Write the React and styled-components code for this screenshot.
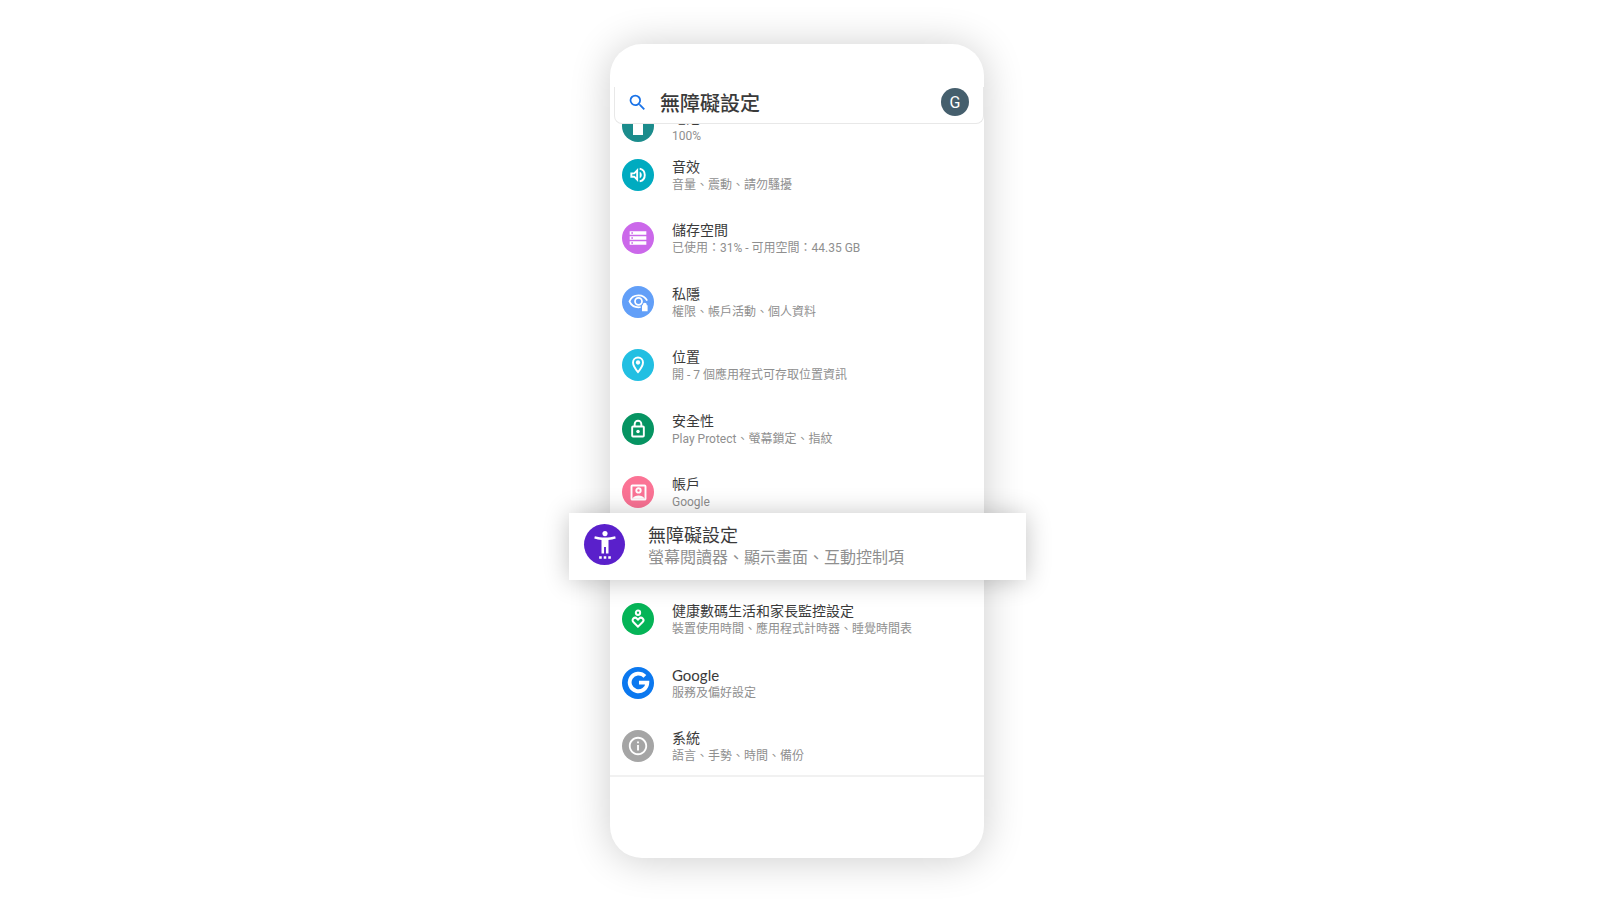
import React from 'react'
import styled, { createGlobalStyle } from 'styled-components'
import { MdSearch, MdStorage, MdOutlineInfo } from 'react-icons/md'

const BatteryIcon = () => (
  <svg viewBox="0 0 24 24" fill="currentColor" aria-hidden="true">
    <path d="M9 0h6v2h2v19H7V2h2z" />
  </svg>
)

const VolumeIcon = () => (
  <svg viewBox="0 0 24 24" fill="none" stroke="currentColor" strokeWidth="2.300" aria-hidden="true">
    <path d="M4 10v4h3.500l3.500 3.500v-11L7.500 10z" />
    <path d="M14 8v8c1.500-.7 2.500-2.200 2.500-4S15.500 8.700 14 8z" fill="currentColor" stroke="none" />
    <path d="M14 4.300a7.900 7.900 0 0 1 0 15.400" />
  </svg>
)

const PrivacyIcon = () => (
  <svg viewBox="0 0 24 24" fill="none" stroke="currentColor" strokeWidth="2" aria-hidden="true">
    <path d="M14.500 18.300c-.8.2-1.700.3-2.500.3-4.500 0-8.500-2.500-10.300-6.800C3.500 7.500 7.500 5 12 5c4.300 0 8 2.300 9.900 6" />
    <circle cx="12" cy="11.800" r="4" />
    <path
      d="M16 16.200h1v-.7a2.200 2.200 0 0 1 4.400 0v.7h1V23H16z"
      fill="currentColor"
      stroke="none"
    />
  </svg>
)

const LocationIcon = () => (
  <svg viewBox="0 0 24 24" fill="none" stroke="currentColor" strokeWidth="2.300" aria-hidden="true">
    <path d="M12 20.500c-3.300-3.900-6-7.900-6-11.500a6 6 0 0 1 12 0c0 3.600-2.700 7.600-6 11.500z" />
    <circle cx="12" cy="9" r="2.600" fill="currentColor" stroke="none" />
  </svg>
)

const LockIcon = () => (
  <svg viewBox="0 0 24 24" fill="none" stroke="currentColor" strokeWidth="2.300" aria-hidden="true">
    <rect x="5" y="9" width="14" height="12" rx="1" />
    <path d="M8 9V6a4 4 0 0 1 8 0v3" />
    <circle cx="12" cy="15" r="2.100" fill="currentColor" stroke="none" />
  </svg>
)

const AccountIcon = () => (
  <svg viewBox="0 0 24 24" fill="none" stroke="currentColor" strokeWidth="2.200" aria-hidden="true">
    <rect x="4" y="4" width="16" height="16" rx="1" />
    <circle cx="12" cy="9.600" r="2.500" />
    <path d="M5 19c1.200-2.600 4.300-3.600 7-3.600s5.800 1 7 3.600z" fill="currentColor" stroke="none" />
  </svg>
)

const WellbeingIcon = () => (
  <svg viewBox="0 0 24 24" fill="none" stroke="currentColor" strokeWidth="2.400" aria-hidden="true">
    <circle cx="12" cy="4.500" r="2.600" />
    <path d="M12 21.200l-5.600-5.500a3 3 0 0 1 4.200-4.300l1.400 1.400 1.400-1.400a3 3 0 0 1 4.200 4.300z" />
  </svg>
)

const GoogleIcon = () => (
  <svg viewBox="0 0 24 24" fill="none" stroke="currentColor" strokeWidth="4" aria-hidden="true">
    <path d="M18.700 5.600A9.200 9.200 0 1 0 21.200 12.200H12.500" />
  </svg>
)

const AccessibilityIcon = () => (
  <svg viewBox="0 0 24 24" fill="currentColor" aria-hidden="true">
    <circle cx="12" cy="2.200" r="2.200" />
    <path d="M20.700 4.400c-2.700.8-5.700 1.200-8.700 1.200s-6-.4-8.700-1.200L2.800 6.500c2 .6 4.200 1 6.200 1.200V19.200h2.200v-5.400h1.600v5.400H15V7.700c2-.2 4.200-.6 6.200-1.200z" />
    <path d="M7 21.600h2.200v2.200H7zM10.900 21.600h2.200v2.200h-2.200zM14.800 21.600H17v2.200h-2.200z" />
  </svg>
)

const battery = { title: '電池', text: '100%', color: '#1b8c8c', icon: BatteryIcon, size: 24 }

const items = [
  { title: '音效', text: '音量、震動、請勿騷擾', color: '#00abc0', icon: VolumeIcon, size: 20 },
  { title: '儲存空間', text: '已使用：31% - 可用空間：44.35 GB', color: '#cb68ea', icon: MdStorage, size: 20 },
  { title: '私隱', text: '權限、帳戶活動、個人資料', color: '#629ff8', icon: PrivacyIcon, size: 21 },
  { title: '位置', text: '開 - 7 個應用程式可存取位置資訊', color: '#22bfe2', icon: LocationIcon, size: 20 },
  { title: '安全性', text: 'Play Protect、螢幕鎖定、指紋', color: '#069462', icon: LockIcon, size: 20 },
  { title: '帳戶', text: 'Google', color: '#fb7395', icon: AccountIcon, size: 21 },
  { title: '無障礙設定', text: '螢幕閱讀器、顯示畫面、互動控制項', color: '#5a20cb', icon: AccessibilityIcon, size: 28, raised: true },
  { title: '健康數碼生活和家長監控設定', text: '裝置使用時間、應用程式計時器、睡覺時間表', color: '#05b457', icon: WellbeingIcon, size: 20 },
  { title: 'Google', text: '服務及偏好設定', color: '#0b78ef', icon: GoogleIcon, size: 23, latin: true },
  { title: '系統', text: '語言、手勢、時間、備份', color: '#a5a5a5', icon: MdOutlineInfo, size: 22 },
]

const Item = ({ item }) => {
  const Icon = item.icon
  return (
    <Row href="#" $raised={item.raised}>
      <Badge $color={item.color} $size={item.size} $raised={item.raised}>
        <Icon />
      </Badge>
      <Label>
        <Title $raised={item.raised} $latin={item.latin}>{item.title}</Title>
        <Summary $raised={item.raised}>{item.text}</Summary>
      </Label>
    </Row>
  )
}

const App = () => {
  return (
    <Page lang="zh-Hant">
      <GlobalStyle />
      <Phone>
        <Header>
          <SearchButton aria-label="搜尋">
            <MdSearch />
          </SearchButton>
          <Heading>無障礙設定</Heading>
          <Avatar>G</Avatar>
        </Header>
        <Peek>
          <Item item={battery} />
        </Peek>
        <List>
          {items.map((item) => (
            <li key={item.title}>
              <Item item={item} />
            </li>
          ))}
        </List>
        <Footer />
      </Phone>
    </Page>
  )
}
export default App

const GlobalStyle = createGlobalStyle`
*{
  box-sizing: border-box;
}
body{
  margin: 0;
  background: #fff;
  font-family: Roboto, "Noto Sans CJK TC", sans-serif;
}
`
const Page = styled.main`
display: flex;
justify-content: center;
align-items: flex-start;
min-height: 100vh;
padding: 44px 6px 42px 0;
overflow: hidden;
`
const Phone = styled.section`
display: flex;
flex-direction: column;
width: 100%;
max-width: 374px;
min-height: 814px;
padding-top: 43px;
background: #fff;
border-radius: 32px;
box-shadow: 0 2px 40px rgba(0,0,0,0.2);
`
const Header = styled.header`
display: flex;
align-items: center;
height: 37px;
margin-left: 4px;
padding: 0 14px 6px 12px;
border: 1px solid #e8e8e8;
border-top: 0;
border-radius: 0 0 8px 8px;
`
const SearchButton = styled.button`
display: flex;
padding: 0;
border: 0;
background: none;
color: #1a73e8;
font-size: 21px;
cursor: pointer;
`
const Heading = styled.h1`
flex: 1;
margin: 4px 0 0 12px;
font-size: 20px;
line-height: 24px;
font-weight: 500;
color: #3a3a3a;
`
const Avatar = styled.button`
width: 28px;
height: 28px;
padding: 0;
border: 0;
border-radius: 50%;
background: #455f6d;
color: #fff;
font-family: Roboto, sans-serif;
font-size: 16px;
cursor: pointer;
`
const Peek = styled.div`
display: flex;
align-items: flex-end;
height: 19px;
padding-bottom: 1px;
overflow: hidden;
`
const List = styled.ul`
flex: 1;
display: flex;
flex-direction: column;
justify-content: space-between;
margin: 0;
padding: 16px 0 13px;
list-style: none;

li{
  display: flex;
  align-items: center;
  height: 32px;
}
`
const Row = styled.a`
display: flex;
align-items: center;
flex: 1;
gap: ${(p) => (p.$raised ? 23 : 18)}px;
height: ${(p) => (p.$raised ? 67 : 32)}px;
padding: ${(p) => (p.$raised ? '0 15px 4px' : '0 12px')};
text-decoration: none;
${(p) => p.$raised && `
position: relative;
z-index: 1;
flex-shrink: 0;
margin: -18px -42px 0 -41px;
background: #fff;
box-shadow: 0 1px 26px rgba(0,0,0,0.24);
`}
`
const Badge = styled.span`
display: flex;
align-items: center;
justify-content: center;
flex: none;
width: ${(p) => (p.$raised ? 41 : 32)}px;
height: ${(p) => (p.$raised ? 41 : 32)}px;
border-radius: 50%;
background: ${(p) => p.$color};
color: #fff;

svg{
  width: ${(p) => p.$size}px;
  height: ${(p) => p.$size}px;
}
`
const Label = styled.span`
display: flex;
flex-direction: column;
padding-top: 2px;
white-space: nowrap;
`
const Title = styled.span`
font-family: ${(p) => (p.$latin ? 'Lato' : 'Roboto')}, "Noto Sans CJK TC", sans-serif;
font-size: ${(p) => (p.$raised ? 18 : p.$latin ? 15 : 14)}px;
line-height: ${(p) => (p.$raised ? 24 : 18)}px;
color: #3a3a3a;
`
const Summary = styled.span`
font-size: ${(p) => (p.$raised ? 16 : 12)}px;
line-height: ${(p) => (p.$raised ? 20 : 18)}px;
color: #8f8f8f;
`
const Footer = styled.footer`
height: 83px;
border-top: 2px solid #f1f1f1;
`
